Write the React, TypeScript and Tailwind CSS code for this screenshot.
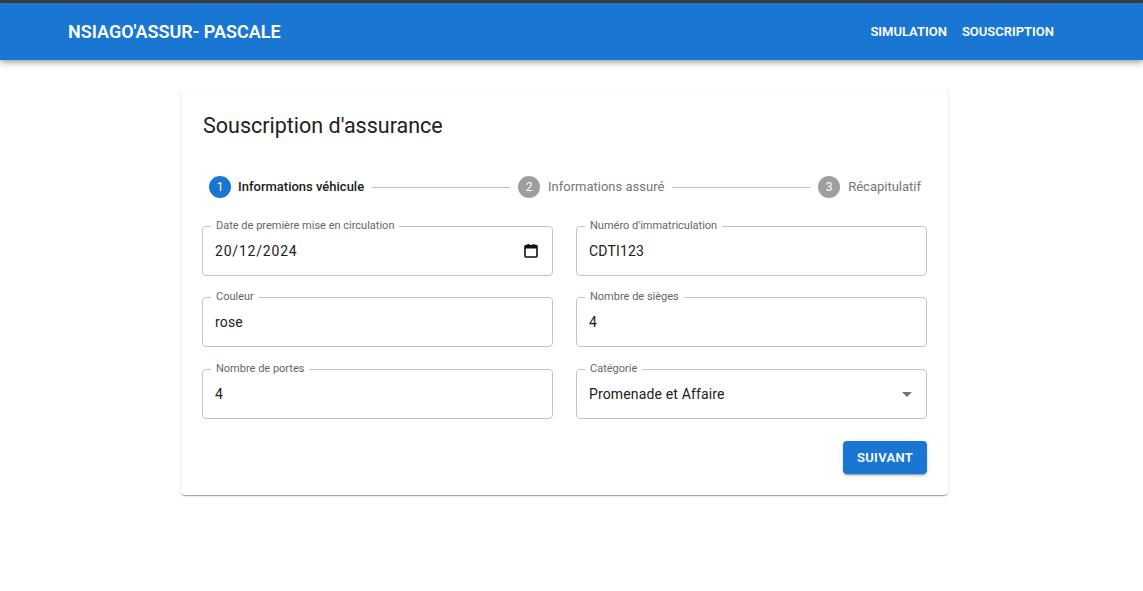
import React from "react"

const Field = ({ label, value, icon, wide }: { label: string; value: string; icon?: React.ReactNode; wide?: boolean }) => {
  return (
    <div className="relative flex h-[50px] items-center rounded-[4px] border border-[#c4c4c4] pl-[12px] pr-[13px]">
      <span className="absolute -top-[8px] left-[8px] bg-white px-[5px] text-[11px] leading-[14px] text-[#666666]">
        {label}
      </span>
      <span
        className={
          wide
            ? "flex-1 pt-[1px] text-[14px] tracking-[0.8px] text-[#212121]"
            : "flex-1 pt-[1px] text-[14px] tracking-[0.15px] text-[#212121]"
        }
      >
        {value}
      </span>
      {icon}
    </div>
  )
}

const Step = ({ n, label, active }: { n: number; label: string; active?: boolean }) => {
  return (
    <div className="flex items-center">
      <div
        className={
          active
            ? "flex h-[22px] w-[22px] items-center justify-center rounded-full bg-[#1976d2] text-[12px] text-white"
            : "flex h-[22px] w-[22px] items-center justify-center rounded-full bg-[#9e9e9e] text-[12px] text-white"
        }
      >
        {n}
      </div>
      <span
        className={
          active
            ? "pl-[7px] text-[13px] font-medium text-[#212121]"
            : "pl-[8px] text-[13px] text-[#757575]"
        }
      >
        {label}
      </span>
    </div>
  )
}

const App = () => {
  return (
    <div className="min-h-[591px] bg-white font-['Roboto',sans-serif]">
      {/* top bar */}
      <div className="h-[3px] bg-[#3d3d3d]" />
      <header className="relative z-10 flex h-[57px] items-center justify-between bg-[#1976d2] pl-[68px] pr-[89px] shadow-[0_2px_4px_-1px_rgba(0,0,0,0.2),0_4px_5px_0_rgba(0,0,0,0.14),0_1px_10px_0_rgba(0,0,0,0.12)]">
        <h1 className="text-[18px] font-semibold text-white">NSIAGO'ASSUR- PASCALE</h1>
        <nav className="flex gap-[15px] text-[13px] font-semibold text-white">
          <span>SIMULATION</span>
          <span>SOUSCRIPTION</span>
        </nav>
      </header>

      {/* card */}
      <section className="ml-[181px] mt-[29px] w-[767px] rounded-[4px] bg-white p-[21px] shadow-[0_2px_1px_-1px_rgba(0,0,0,0.2),0_1px_1px_0_rgba(0,0,0,0.14),0_1px_3px_0_rgba(0,0,0,0.12)]">
        <h2 className="pl-[1px] text-[21.5px] leading-[32px] text-[#212121]">Souscription d'assurance</h2>

        {/* stepper */}
        <div className="mt-[34px] flex items-center pl-[7px] pr-[6px]">
          <Step n={1} label="Informations véhicule" active />
          <div className="mx-[8px] h-px flex-1 bg-[#bdbdbd]" />
          <Step n={2} label="Informations assuré" />
          <div className="mx-[8px] h-px flex-1 bg-[#bdbdbd]" />
          <Step n={3} label="Récapitulatif" />
        </div>

        {/* form */}
        <div className="mt-[28px] grid grid-cols-2 gap-x-[23px] gap-y-[21px]">
          <Field
            label="Date de première mise en circulation"
            value="20/12/2024"
            wide
            icon={
              <svg width="14" height="14" viewBox="0 0 14 14" className="mr-[1px]">
                <rect x="1" y="1.5" width="12" height="11.5" rx="1" fill="none" stroke="#111" strokeWidth="1.6" />
                <rect x="1" y="1.5" width="12" height="3" fill="#111" />
                <rect x="3.5" y="0" width="1.5" height="2" fill="#111" />
                <rect x="9" y="0" width="1.5" height="2" fill="#111" />
              </svg>
            }
          />
          <Field label="Numéro d'immatriculation" value="CDTI123" />
          <Field label="Couleur" value="rose" />
          <Field label="Nombre de sièges" value="4" />
          <div className="col-span-2 mt-[1px] grid grid-cols-2 gap-x-[23px]">
            <Field label="Nombre de portes" value="4" />
            <Field
              label="Catégorie"
              value="Promenade et Affaire"
              icon={
                <svg width="24" height="24" viewBox="0 0 24 24" className="-mr-[6px]">
                  <path d="M7 10l5 5 5-5z" fill="#757575" />
                </svg>
              }
            />
          </div>
        </div>

        {/* buttons */}
        <div className="mt-[22px] flex justify-end">
          <button className="h-[33px] rounded-[4px] bg-[#1976d2] px-[14px] text-[13px] font-semibold tracking-[0.3px] text-white shadow-[0_3px_1px_-2px_rgba(0,0,0,0.2),0_2px_2px_0_rgba(0,0,0,0.14),0_1px_5px_0_rgba(0,0,0,0.12)]">
            SUIVANT
          </button>
        </div>
      </section>
    </div>
  )
}

export default App
